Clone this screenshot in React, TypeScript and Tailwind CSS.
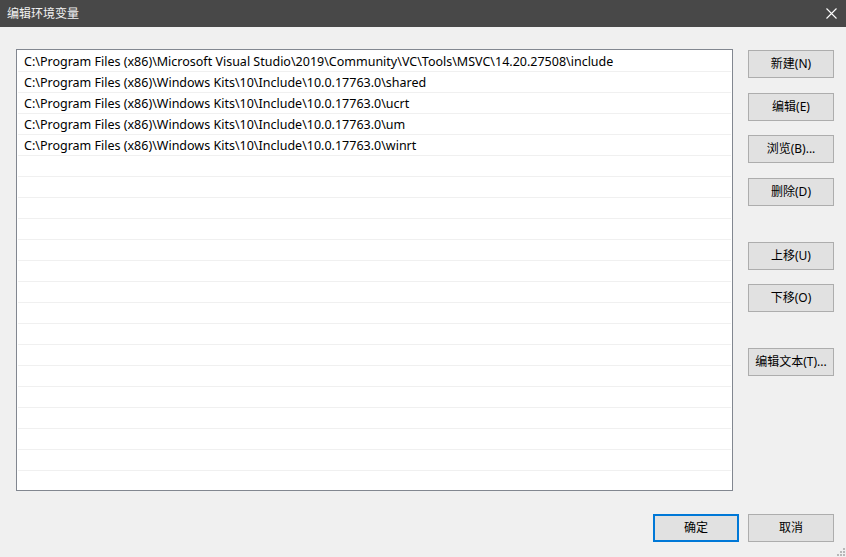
import React from 'react';

const paths = [
    'C:\\Program Files (x86)\\Microsoft Visual Studio\\2019\\Community\\VC\\Tools\\MSVC\\14.20.27508\\include',
    'C:\\Program Files (x86)\\Windows Kits\\10\\Include\\10.0.17763.0\\shared',
    'C:\\Program Files (x86)\\Windows Kits\\10\\Include\\10.0.17763.0\\ucrt',
    'C:\\Program Files (x86)\\Windows Kits\\10\\Include\\10.0.17763.0\\um',
    'C:\\Program Files (x86)\\Windows Kits\\10\\Include\\10.0.17763.0\\winrt',
];

const font = { fontFamily: '"Segoe UI", "Noto Sans", "Noto Sans CJK SC", sans-serif' };

const sideButtons: { label: string; mt: string }[] = [
    { label: '新建(N)', mt: 'mt-0' },
    { label: '编辑(E)', mt: 'mt-[15px]' },
    { label: '浏览(B)...', mt: 'mt-[14px]' },
    { label: '删除(D)', mt: 'mt-[15px]' },
    { label: '上移(U)', mt: 'mt-[36px]' },
    { label: '下移(O)', mt: 'mt-[14px]' },
    { label: '编辑文本(T)...', mt: 'mt-[36px]' },
];

const Button = ({ label, className = '', primary = false }: { label: string; className?: string; primary?: boolean }) => (
    <button
        className={`w-[86px] h-[28px] bg-[#e1e1e1] text-[12px] text-[#000] flex items-center justify-center ${
            primary ? 'border-2 border-[#0078d7]' : 'border border-[#adadad]'
        } ${className}`}
    >
        {label}
    </button>
);

export default function App() {
    const rows = Array.from({ length: 21 }, (_, i) => paths[i] ?? '');

    return (
        <div className="w-[846px] h-[557px] bg-[#f0f0f0] flex flex-col relative overflow-hidden" style={font}>
            <div className="h-[27px] bg-[#484848] flex items-center justify-between pl-[7px] pr-[8px] shrink-0">
                <span className="text-[12px] text-[#f2f2f2]">编辑环境变量</span>
                <svg width="11" height="11" viewBox="0 0 11 11" className="mr-[1px]">
                    <path d="M0.5 0.5 L10.5 10.5 M10.5 0.5 L0.5 10.5" stroke="#ffffff" strokeWidth="1.1" />
                </svg>
            </div>

            <div className="flex">
                <div className="ml-[16px] mt-[22px] w-[717px] h-[442px] bg-white border border-[#828790] p-[1px] overflow-hidden">
                    {rows.map((text, i) => (
                        <div
                            key={i}
                            className="h-[21px] border-b border-[#f0f0f0] pl-[6px] pt-[1px] text-[12.5px] leading-[20px] text-[#000] whitespace-nowrap"
                        >
                            {text}
                        </div>
                    ))}
                </div>

                <div className="ml-[15px] mt-[23px] flex flex-col">
                    {sideButtons.map((b) => (
                        <Button key={b.label} label={b.label} className={b.mt} />
                    ))}
                </div>
            </div>

            <div className="flex justify-end gap-[9px] pr-[12px] mt-[23px]">
                <Button label="确定" primary />
                <Button label="取消" />
            </div>

            <div className="absolute right-[1px] bottom-[1px] w-[8px] h-[8px]">
                <div className="absolute right-0 bottom-0 w-[2px] h-[2px] bg-[#b8b8b8]" />
                <div className="absolute right-[3px] bottom-0 w-[2px] h-[2px] bg-[#b8b8b8]" />
                <div className="absolute right-[6px] bottom-0 w-[2px] h-[2px] bg-[#b8b8b8]" />
                <div className="absolute right-0 bottom-[3px] w-[2px] h-[2px] bg-[#b8b8b8]" />
                <div className="absolute right-[3px] bottom-[3px] w-[2px] h-[2px] bg-[#b8b8b8]" />
                <div className="absolute right-0 bottom-[6px] w-[2px] h-[2px] bg-[#b8b8b8]" />
            </div>
        </div>
    );
}
